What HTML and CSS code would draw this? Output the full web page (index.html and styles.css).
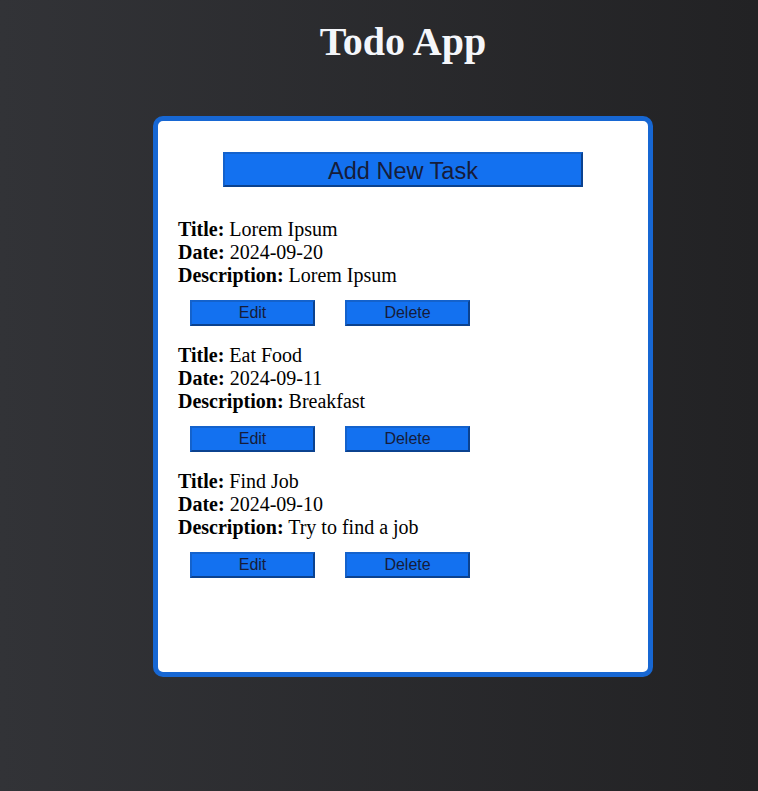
FILE: index.html
```html
<!DOCTYPE html>
<html lang="en">
<head>
<meta charset="utf-8">
<title>Todo App</title>
<link rel="stylesheet" href="styles.css">
</head>
<body>
<div class="page">
  <h1 class="app-title">Todo App</h1>
  <div class="card">
    <div class="add-row"><button class="btn btn-add">Add New Task</button></div>
    <div class="task">
      <div class="line"><b>Title:</b> Lorem Ipsum</div>
      <div class="line"><b>Date:</b> 2024-09-20</div>
      <div class="line"><b>Description:</b> Lorem Ipsum</div>
      <div class="actions"><button class="btn btn-small">Edit</button><button class="btn btn-small">Delete</button></div>
    </div>
    <div class="task">
      <div class="line"><b>Title:</b> Eat Food</div>
      <div class="line"><b>Date:</b> 2024-09-11</div>
      <div class="line"><b>Description:</b> Breakfast</div>
      <div class="actions"><button class="btn btn-small">Edit</button><button class="btn btn-small">Delete</button></div>
    </div>
    <div class="task">
      <div class="line"><b>Title:</b> Find Job</div>
      <div class="line"><b>Date:</b> 2024-09-10</div>
      <div class="line"><b>Description:</b> Try to find a job</div>
      <div class="actions"><button class="btn btn-small">Edit</button><button class="btn btn-small">Delete</button></div>
    </div>
  </div>
</div>
</body>
</html>
```
FILE: styles.css
```css
html, body {
  margin: 0;
  height: 100%;
}
body {
  background: linear-gradient(to right, #323337, #222224);
  font-family: "Liberation Serif", "Times New Roman", serif;
}
.page {
  display: flex;
  flex-direction: column;
  align-items: center;
  padding-left: 48px;
}
.app-title {
  margin: 19px 0 0;
  height: 97px;
  font-size: 40px;
  line-height: 46px;
  color: #f4f6fa;
  font-weight: bold;
}
.card {
  box-sizing: border-box;
  width: 500px;
  min-height: 561px;
  background: #ffffff;
  border: 5px solid #1767d3;
  border-radius: 10px;
  padding: 31px 20px 20px;
  font-size: 20px;
  line-height: 23px;
  color: #000;
}
.add-row {
  display: flex;
  justify-content: center;
  margin-bottom: 31px;
}
.btn {
  font-family: "Liberation Sans", Arial, sans-serif;
  background: #1371f0;
  color: #161c3a;
  border: 2px solid;
  border-color: #1462cc #0b428f #0b428f #1462cc;
  margin: 0;
  cursor: pointer;
}
.btn-add {
  width: 360px;
  height: 35px;
  font-size: 23.5px;
  padding: 3px 0 0;
}
.task {
  margin-bottom: 18px;
}
.actions {
  display: flex;
  gap: 30px;
  padding-left: 12px;
  margin-top: 13px;
}
.btn-small {
  width: 125px;
  height: 26px;
  font-size: 16px;
  padding: 0;
}
```
